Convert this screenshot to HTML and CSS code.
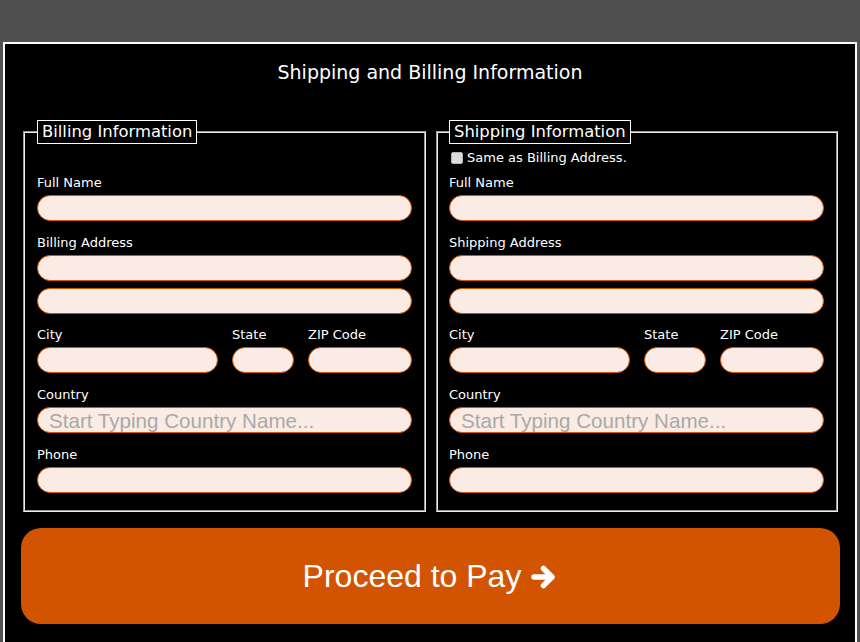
FILE: index.html
```html
<!DOCTYPE html>
<html>
<head>
<meta charset="utf-8">
<title>Shipping and Billing Information</title>
<link rel="stylesheet" href="styles.css">
</head>
<body>
<div class="page">
  <h1 class="title">Shipping and Billing Information</h1>
  <form class="form">
    <div class="columns">
      <fieldset class="box box--billing">
        <legend class="legend">Billing Information</legend>
        <div class="same-row same-row--empty"></div>
        <div class="field">
          <label class="label">Full Name</label>
          <input class="input" type="text">
        </div>
        <div class="field">
          <label class="label">Billing Address</label>
          <input class="input" type="text">
          <input class="input input--second" type="text">
        </div>
        <div class="field row3">
          <div class="cell">
            <label class="label">City</label>
            <input class="input" type="text">
          </div>
          <div class="cell">
            <label class="label">State</label>
            <input class="input" type="text">
          </div>
          <div class="cell">
            <label class="label">ZIP Code</label>
            <input class="input" type="text">
          </div>
        </div>
        <div class="field">
          <label class="label">Country</label>
          <input class="input input--country" type="text" placeholder="Start Typing Country Name...">
        </div>
        <div class="field">
          <label class="label">Phone</label>
          <input class="input" type="text">
        </div>
      </fieldset>
      <fieldset class="box box--shipping">
        <legend class="legend">Shipping Information</legend>
        <div class="same-row">
          <input class="check" type="checkbox" id="same">
          <label class="check-label" for="same">Same as Billing Address.</label>
        </div>
        <div class="field">
          <label class="label">Full Name</label>
          <input class="input" type="text">
        </div>
        <div class="field">
          <label class="label">Shipping Address</label>
          <input class="input" type="text">
          <input class="input input--second" type="text">
        </div>
        <div class="field row3">
          <div class="cell">
            <label class="label">City</label>
            <input class="input" type="text">
          </div>
          <div class="cell">
            <label class="label">State</label>
            <input class="input" type="text">
          </div>
          <div class="cell">
            <label class="label">ZIP Code</label>
            <input class="input" type="text">
          </div>
        </div>
        <div class="field">
          <label class="label">Country</label>
          <input class="input input--country" type="text" placeholder="Start Typing Country Name...">
        </div>
        <div class="field">
          <label class="label">Phone</label>
          <input class="input" type="text">
        </div>
      </fieldset>
    </div>
    <button class="pay" type="button">
      <span class="pay-text">Proceed to Pay</span>
      <svg class="pay-icon" viewBox="0 0 28 28" width="28" height="28" aria-hidden="true">
        <path d="M4 14 H21.5 M13.5 5.5 L22 14 L13.5 22.5" fill="none" stroke="#fff" stroke-width="5.5" stroke-linecap="round" stroke-linejoin="round"/>
      </svg>
    </button>
  </form>
</div>
</body>
</html>
```

FILE: styles.css
```css
html, body {
  margin: 0;
  padding: 0;
}

body {
  background: #505050;
  font-family: "DejaVu Sans", Verdana, sans-serif;
  color: #fff;
  overflow: hidden;
}

.page {
  box-sizing: border-box;
  margin: 42px 0 0 3px;
  width: 854px;
  min-height: 620px;
  background: #000;
  border: 2px solid #fff;
  padding-top: 16px;
}

.title {
  margin: 0;
  text-align: center;
  font-weight: normal;
  font-size: 19px;
  line-height: 24px;
  color: #fff;
}

.form {
  padding: 36px 15px 0 16px;
}

.columns {
  display: flex;
  gap: 10px;
  margin: 0 2px 0 2px;
}

.box {
  min-width: 0;
  margin: 0;
  padding: 0 12px 17px 12px;
  border: 2px groove #eeeeee;
}

.box--billing {
  flex: 0 0 403px;
  box-sizing: border-box;
}

.box--shipping {
  flex: 1 1 0;
  box-sizing: border-box;
  padding-left: 11px;
}

.legend {
  padding: 0 4px;
  border: 1px solid #fff;
  font-size: 16.4px;
  line-height: 22px;
  color: #fff;
}

.same-row {
  display: flex;
  align-items: center;
  height: 20px;
  margin-top: 4px;
}

.check {
  appearance: none;
  -webkit-appearance: none;
  box-sizing: border-box;
  width: 12px;
  height: 12px;
  margin: 0 4px 0 2px;
  background: #dcdcdc;
  border: 1px solid #b4b4b4;
  border-radius: 2px;
}

.check-label {
  font-size: 13px;
  line-height: 16px;
}

.field {
  margin-top: 14px;
  display: flex;
  flex-direction: column;
}

.same-row + .field {
  margin-top: 7px;
}

.label {
  display: block;
  font-size: 13px;
  line-height: 16px;
  margin-bottom: 4px;
  color: #fff;
}

.input {
  box-sizing: border-box;
  display: block;
  width: 100%;
  height: 26px;
  margin: 0;
  padding: 2px 11px 0 11px;
  background: #faece4;
  border: 1px solid #d35400;
  border-radius: 13px;
  font-family: "Liberation Sans", Arial, sans-serif;
  font-size: 20.6px;
  color: #333;
  outline: none;
}

.input--second {
  margin-top: 7px;
}

.input::placeholder {
  color: #a9a9a9;
}

.row3 {
  display: grid;
  grid-template-columns: 181px 62px 1fr;
  column-gap: 14px;
  margin-top: 13px;
}

.cell {
  display: flex;
  flex-direction: column;
  min-width: 0;
}

.pay {
  box-sizing: border-box;
  display: flex;
  align-items: center;
  justify-content: center;
  gap: 9px;
  width: 100%;
  height: 96px;
  margin-top: 16px;
  padding: 0;
  background: #d35400;
  border: none;
  border-radius: 20px;
  color: #fff;
  font-family: "Liberation Sans", Arial, sans-serif;
  font-size: 32px;
  cursor: pointer;
}

.pay-text {
  line-height: 36px;
}

.pay-icon {
  display: block;
  margin-top: 1px;
}
```
